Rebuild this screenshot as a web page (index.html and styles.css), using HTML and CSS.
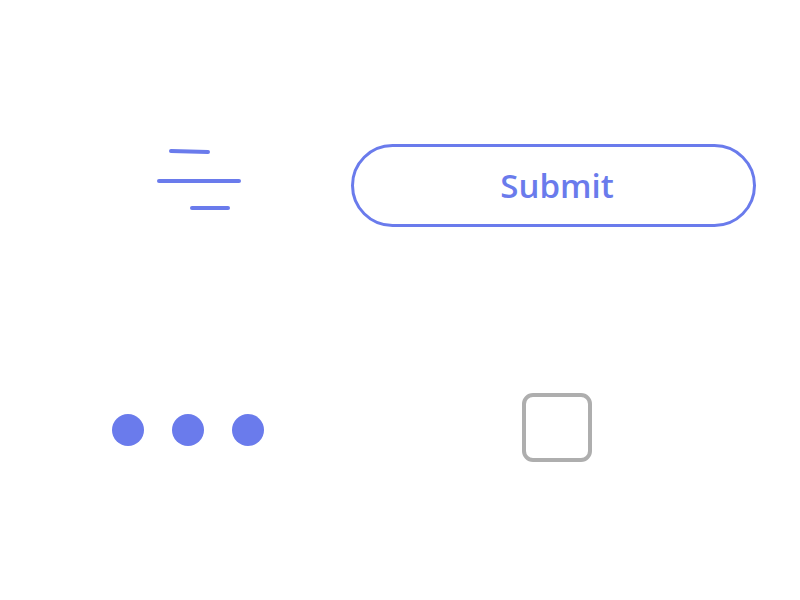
FILE: index.html
```html
<!DOCTYPE html>
<html lang="en">
<head>
    <meta charset="UTF-8">
    <meta name="viewport" content="width=device-width, initial-scale=1.0">
    <title>Controls</title>
    <link rel="stylesheet" href="styles.css">
</head>
<body>
    <div class="board">
        <div class="cell">
            <svg class="filter-icon" width="90" height="66" viewBox="0 0 90 66" aria-label="Filter">
                <line x1="15" y1="5" x2="52" y2="6" />
                <line x1="3" y1="35" x2="83" y2="35" />
                <line x1="36" y1="62" x2="72" y2="62" />
            </svg>
        </div>
        <div class="cell">
            <button class="btn-submit">Submit</button>
        </div>
        <div class="cell">
            <div class="dots">
                <span class="dot"></span>
                <span class="dot"></span>
                <span class="dot"></span>
            </div>
        </div>
        <div class="cell">
            <span class="checkbox"></span>
        </div>
    </div>
</body>
</html>
```

FILE: styles.css
```css
* {
    margin: 0;
    padding: 0;
    box-sizing: border-box;
}

body {
    font-family: "Open Sans", "Noto Sans", sans-serif;
    background: #ffffff;
    width: 800px;
    height: 600px;
    overflow: hidden;
}

.board {
    display: grid;
    grid-template-columns: 326px 405px;
    grid-template-rows: 245px 245px;
    padding: 62px 0 0 25px;
}

.cell {
    display: flex;
    align-items: center;
    justify-content: center;
}

.filter-icon {
    margin-left: 26px;
    margin-top: -11px;
}

.filter-icon line {
    stroke: #6a7bec;
    stroke-width: 4;
    stroke-linecap: round;
}

.btn-submit {
    width: 406px;
    height: 83px;
    margin-top: 1px;
    padding-left: 7px;
    border: 3px solid #6a7bec;
    border-radius: 42px;
    background: #ffffff;
    color: #6a7bec;
    font-family: "Open Sans", "Noto Sans", sans-serif;
    font-size: 33px;
    font-weight: 600;
    cursor: pointer;
}

.dots {
    display: flex;
    gap: 28px;
}

.dot {
    width: 32px;
    height: 32px;
    border-radius: 50%;
    background: #6a7bec;
}

.checkbox {
    width: 70px;
    height: 69px;
    margin: -4px 0 0 7px;
    border: 4px solid #aeaeae;
    border-radius: 11px;
}
```
